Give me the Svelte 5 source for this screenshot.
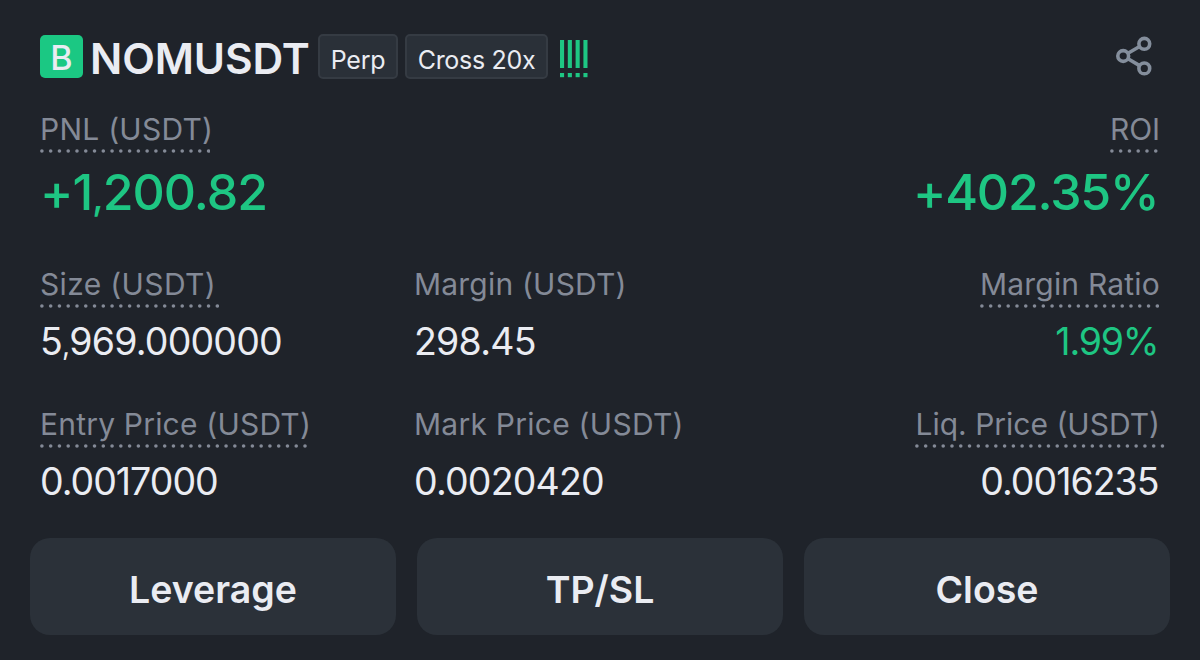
<script lang="ts">
  type Stat = {
    label: string
    value: string
    dots?: number
    tone?: 'up'
    labelTracking: number
    valueTracking: number
  }

  const summary: Stat[] = [
    { label: 'PNL (USDT)', value: '+1,200.82', dots: 20, tone: 'up', labelTracking: 0.25, valueTracking: -0.95 },
    { label: 'ROI', value: '+402.35%', dots: 6, tone: 'up', labelTracking: -0.1, valueTracking: -1.2 },
  ]

  const rows: Stat[][] = [
    [
      { label: 'Size (USDT)', value: '5,969.000000', dots: 21, labelTracking: 0.35, valueTracking: -0.8 },
      { label: 'Margin (USDT)', value: '298.45', labelTracking: 0.2, valueTracking: -0.75 },
      { label: 'Margin Ratio', value: '1.99%', dots: 21, tone: 'up', labelTracking: 0.2, valueTracking: -1.2 },
    ],
    [
      { label: 'Entry Price (USDT)', value: '0.0017000', dots: 31, labelTracking: 0.2, valueTracking: -1 },
      { label: 'Mark Price (USDT)', value: '0.0020420', labelTracking: 0.25, valueTracking: -0.8 },
      { label: 'Liq. Price (USDT)', value: '0.0016235', dots: 29, labelTracking: 0, valueTracking: -1 },
    ],
  ]

  const actions = ['Leverage', 'TP/SL', 'Close']
  const DOT_PITCH = 8.77
</script>

{#snippet cell(stat: Stat)}
  <div class="stat">
    <div class="caption">
      <div class="label" style:letter-spacing="{stat.labelTracking}px">{stat.label}</div>
      <div class="dots">
        {#if stat.dots}
          <svg width={stat.dots * DOT_PITCH - 5} height="4">
            {#each { length: stat.dots } as _, i}
              <circle cx={1.9 + i * DOT_PITCH} cy="2" r="1.8" />
            {/each}
          </svg>
        {/if}
      </div>
    </div>
    <div class="value" class:up={stat.tone === 'up'} style:letter-spacing="{stat.valueTracking}px">
      {#each stat.value.split(',') as part, i}{#if i > 0}<span class="comma">,</span>{/if}{part}{/each}
    </div>
  </div>
{/snippet}

<div class="position">
  <header>
    <span class="side">B</span>
    <h1>NOMUSDT</h1>
    <span class="tag perp">Perp</span>
    <span class="tag cross">Cross 20x</span>
    <svg class="risk" width="28" height="38" viewBox="0 0 28 38">
      {#each [0, 7.8, 15.6, 23.4] as x}
        <rect {x} y="0" width="4.1" height="28" />
        <rect {x} y="33" width="4.1" height="4.2" />
      {/each}
    </svg>
    <button class="share" aria-label="Share">
      <svg width="36" height="40" viewBox="0 0 36 40" fill="none" stroke="currentColor" stroke-width="3.6">
        <circle cx="7.2" cy="20" r="5.4" />
        <circle cx="28.3" cy="7.8" r="5.4" />
        <circle cx="28.3" cy="32.4" r="5.4" />
        <path d="M12 17.2L23.6 10.5M12 22.8L23.6 29.6" />
      </svg>
    </button>
  </header>

  <div class="summary">
    {#each summary as stat}
      {@render cell(stat)}
    {/each}
  </div>

  {#each rows as row}
    <div class="row">
      {#each row as stat}
        {@render cell(stat)}
      {/each}
    </div>
  {/each}

  <footer>
    {#each actions as action}
      <button class="action">{action}</button>
    {/each}
  </footer>
</div>

<style>
  :global(body) {
    margin: 0;
    background: #1f232a;
  }

  .position {
    box-sizing: border-box;
    width: 1200px;
    height: 660px;
    padding: 34px 30px 0;
    overflow: hidden;
    background: #1f232a;
    color: #eaecf2;
    font-family: Inter, 'Liberation Sans', sans-serif;
    white-space: nowrap;
  }

  button {
    padding: 0;
    border: 0;
    background: none;
    color: inherit;
    font: inherit;
  }

  header {
    display: flex;
    align-items: center;
    height: 45px;
    padding: 0 18px 0 10px;
  }

  .side {
    width: 43px;
    height: 43px;
    margin-right: 7px;
    border-radius: 5px;
    background: #1bc883;
    font-size: 34px;
    font-weight: 500;
    line-height: 45px;
    text-align: center;
  }

  h1 {
    width: 228px;
    margin: 0;
    padding-top: 5px;
    font-size: 42.5px;
    font-weight: 600;
    letter-spacing: -0.1px;
    line-height: 48px;
  }

  .tag {
    box-sizing: border-box;
    height: 45px;
    border: 2px solid #353b43;
    border-radius: 5px;
    background: #2a3038;
    font-size: 25px;
    letter-spacing: -0.3px;
    line-height: 49px;
    text-align: center;
  }

  .perp {
    width: 80px;
    margin-right: 7px;
  }

  .cross {
    width: 143px;
    margin-right: 12px;
  }

  .risk {
    margin-top: 4px;
    fill: #1ec683;
  }

  .share {
    display: flex;
    margin: 0 0 1px auto;
    color: #848e9c;
  }

  .stat {
    display: flex;
    flex-direction: column;
    align-items: flex-start;
  }

  .stat:last-child {
    align-items: flex-end;
  }

  .label {
    height: 36px;
    color: #848a97;
    font-size: 30px;
    line-height: 36px;
  }

  /* the underline may run a little past its label */
  .dots {
    width: 0;
    height: 4px;
    margin-top: 2px;
  }

  .dots svg {
    display: block;
    fill: #848a97;
  }

  .value {
    height: 46px;
    margin-top: 11px;
    font-size: 37.5px;
    line-height: 46px;
  }

  .stat:last-child .value {
    padding-right: 1.5px;
  }

  .comma {
    font-size: 0.75em;
    line-height: 1;
  }

  .up {
    color: #1ec683;
  }

  .summary {
    display: flex;
    justify-content: space-between;
    height: 187px;
    padding: 32px 10px 0;
    box-sizing: border-box;
  }

  .summary .value {
    height: 60px;
    margin-top: 9px;
    font-size: 50px;
    font-weight: 500;
    line-height: 60px;
  }

  .row {
    display: grid;
    grid-template-columns: 374px 1fr auto;
    height: 140px;
    padding: 0 10px;
  }

  footer {
    display: grid;
    grid-template-columns: repeat(3, 366px);
    justify-content: space-between;
    margin-top: -8px;
  }

  .action {
    height: 97px;
    padding-top: 6px;
    border-radius: 20px;
    background: #2b3139;
    font-size: 37.5px;
    font-weight: 600;
  }
</style>
